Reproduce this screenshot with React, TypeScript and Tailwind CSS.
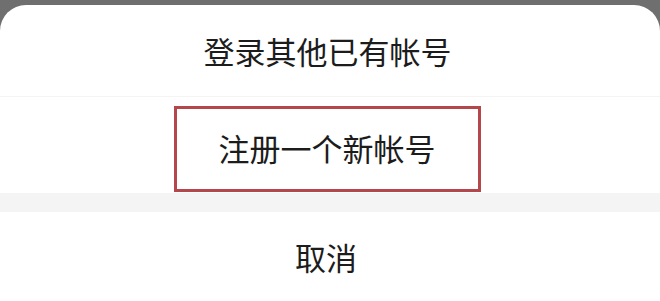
const font = { fontFamily: '"Noto Sans CJK SC", "Noto Sans", sans-serif' };

export default function App() {
    return (
        <div className="w-full h-[301px] overflow-hidden bg-[#6f6f6f] pt-[5px]" style={font}>
            <div className="h-full flex flex-col bg-white rounded-t-[26px] text-[31px] leading-none text-[#1c1c1c]">
                {/* Login with an existing account */}
                <div className="h-[92px] shrink-0 flex items-center justify-center pr-[5px] border-b border-[#f4f4f4]">
                    登录其他已有帐号
                </div>

                {/* Register, outlined in red */}
                <div className="h-[96px] shrink-0 flex justify-center pt-[9px] pr-[6px]">
                    <div className="w-[307px] h-[86px] border-[3px] border-[#b4474b] flex items-center justify-center pb-[4px]">
                        注册一个新帐号
                    </div>
                </div>

                <div className="h-[19px] shrink-0 bg-[#f4f4f4]" />

                {/* Cancel */}
                <div className="flex-1 flex items-center justify-center pr-[8px]">
                    取消
                </div>
            </div>
        </div>
    );
}
